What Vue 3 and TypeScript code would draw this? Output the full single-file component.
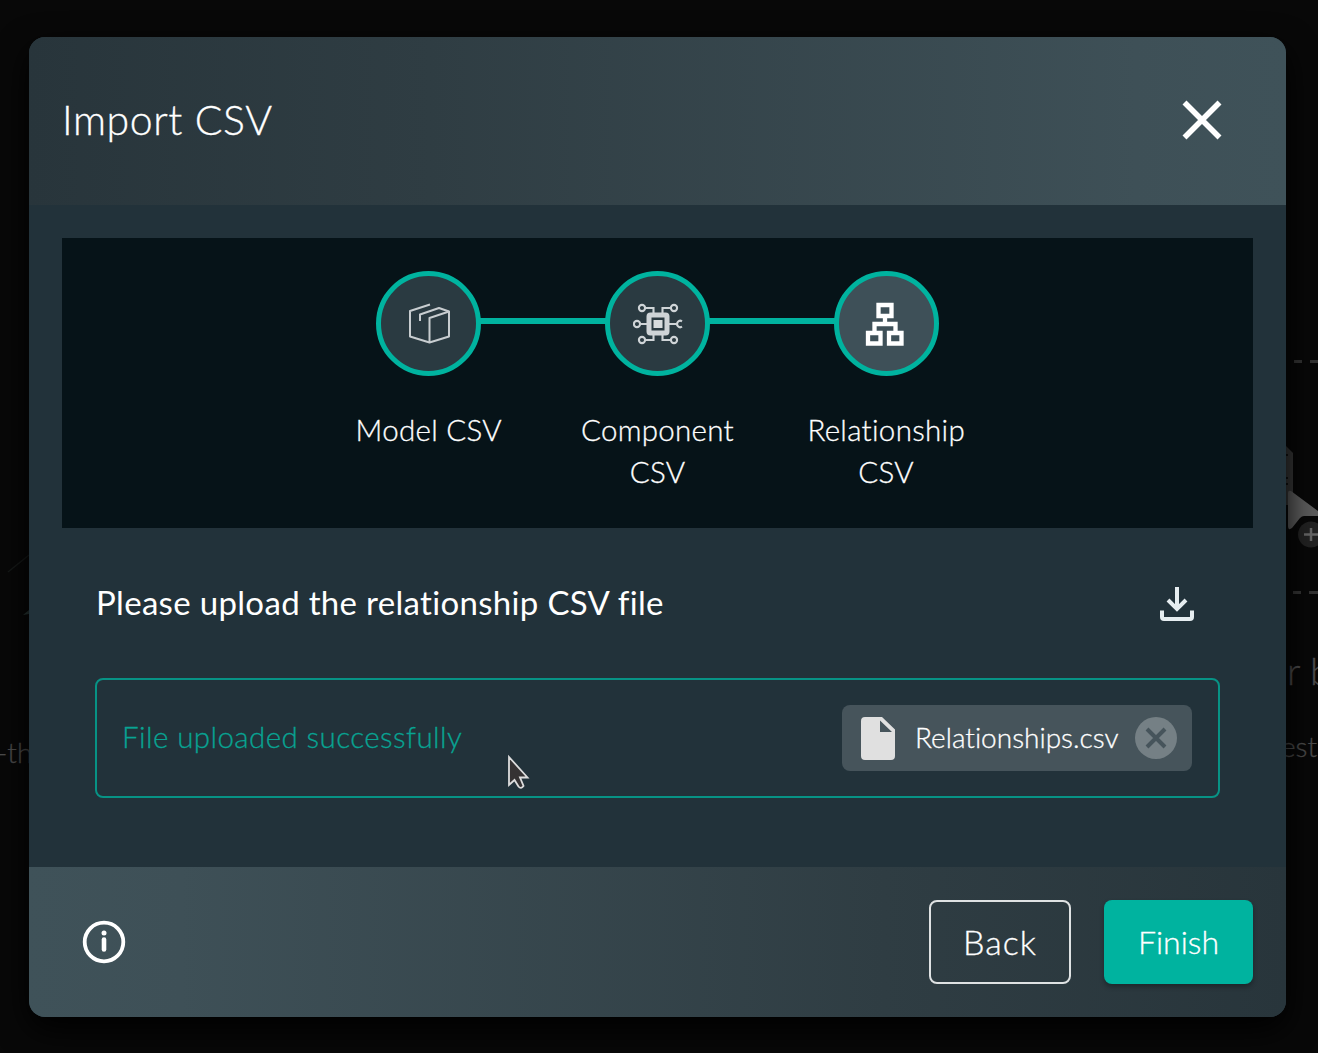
<script setup lang="ts">
interface Step {
  icon: 'model' | 'component' | 'relationship'
  lines: string[]
  active: boolean
}

const steps: Step[] = [
  { icon: 'model', lines: ['Model CSV'], active: false },
  { icon: 'component', lines: ['Component', 'CSV'], active: false },
  { icon: 'relationship', lines: ['Relationship', 'CSV'], active: true },
]
</script>

<template>
  <div class="page">
    <!-- Canvas behind the dimmed overlay -->
    <svg class="backdrop" width="1318" height="1053" viewBox="0 0 1318 1053" aria-hidden="true">
      <path d="M8 572L29 555" stroke="#161918" stroke-width="1.5" />
      <path d="M23 615L29 610V614Z" fill="#2a3836" />
      <path d="M1294 361.5h8M1310 361.5h8M1293 592.5h8M1309 592.5h9" stroke="#333" stroke-width="3" />
      <path d="M1280 440L1293 453V505H1280Z" fill="#383838" />
      <path d="M1286 455h2M1286 478h2M1286 484h2" stroke="#111" stroke-width="2" />
      <path d="M1288 493Q1288 490 1291 491L1318 511V516H1304Q1302 516 1300 518L1292 528Q1288 531 1288 526Z" fill="#5c5c5c" />
      <circle cx="1311" cy="534.500" r="13" fill="#222" />
      <path d="M1304 534.500h14M1311 528v13" stroke="#666" stroke-width="2.500" />
    </svg>
    <span class="ghost ghost-left">-th</span>
    <span class="ghost ghost-title">r b</span>
    <span class="ghost ghost-sub">ests</span>

    <section class="modal">
      <header class="head">
        <h1 class="title">Import CSV</h1>
        <svg class="close" width="40" height="40" viewBox="0 0 40 40">
          <path d="M2.500 2.500L37.500 37.500M37.500 2.500L2.500 37.500" stroke="#fff" stroke-width="5.600" />
        </svg>
      </header>

      <div class="body">
        <div class="stepper">
          <div v-for="step in steps" :key="step.icon" class="step">
            <div class="circle" :class="{ active: step.active }">
              <svg v-if="step.icon === 'model'" width="42" height="42" viewBox="0 0 42 42" fill="none" stroke="#c8cdd0" stroke-width="2" stroke-linejoin="round">
                <path d="M22 1.500L2 8V33.500L21.500 39.500L41 33.500V8.500L31 5L12 11.500V18" />
                <path d="M41 8.500L21.500 15V39.500" />
              </svg>
              <svg v-else-if="step.icon === 'component'" width="50" height="42" viewBox="0 0 50 42" fill="none" stroke="#cfd4d7" stroke-width="2.100">
                <path d="M12 5H20.500V11M38 5H29.500V11M12 37H20.500V31M38 37H29.500V31M7 21H15M35 21H43" />
                <circle cx="9" cy="5" r="3.100" /><circle cx="41" cy="5" r="3.100" />
                <circle cx="9" cy="37" r="3.100" /><circle cx="41" cy="37" r="3.100" />
                <circle cx="4" cy="21" r="3.100" />
                <path d="M49 18.300A3.200 3.200 0 1 0 49 23.700" />
                <rect x="16" y="12" width="18" height="18" rx="1.500" stroke-width="5" />
                <rect x="20.500" y="17" width="9" height="8" fill="#d8dcde" stroke="none" />
              </svg>
              <svg v-else class="tree" width="40" height="44" viewBox="0 0 40 44" fill="none" stroke="#fff" stroke-width="4.300">
                <path d="M13.500 3H26.500V14H13.500ZM3 31H15.500V41.500H3ZM24 31H36.500V41.500H24ZM20 14V22M9.500 31V22H30.500V31" />
              </svg>
            </div>
            <p class="label"><span v-for="line in step.lines" :key="line">{{ line }}</span></p>
          </div>
        </div>

        <div class="prompt">
          <p class="prompt-text">Please upload the relationship CSV file</p>
          <svg width="34" height="36" viewBox="0 0 34 36" fill="none" stroke="#e6edf0" stroke-width="4">
            <path d="M17 1V23M8 14L17 23L26 14M2 24.500V31Q2 33 4 33H30Q32 33 32 31V24.500" />
          </svg>
        </div>

        <div class="upload">
          <span class="status">File uploaded successfully</span>
          <div class="chip">
            <svg width="34" height="43" viewBox="0 0 34 43">
              <path fill="#e0e0e0" fill-rule="evenodd" d="M4 0H21L34 12.500V39Q34 43 30 43H4Q0 43 0 39V4Q0 0 4 0ZM19 3.500V15H31Z" />
            </svg>
            <span class="filename">Relationships.csv</span>
            <svg width="42" height="42" viewBox="0 0 42 42">
              <circle cx="21" cy="21" r="21" fill="#758085" />
              <path d="M12 12L30 30M30 12L12 30" stroke="#46545b" stroke-width="4" />
            </svg>
          </div>
        </div>
      </div>

      <footer class="foot">
        <svg class="info" width="44" height="44" viewBox="0 0 44 44" fill="none" stroke="#fff">
          <circle cx="22" cy="22" r="19.300" stroke-width="3.800" />
          <path d="M22 19.500V29.500" stroke-width="4.600" stroke-linecap="round" />
          <circle cx="22" cy="13" r="2.500" fill="#fff" stroke="none" />
        </svg>
        <button class="btn back"><span>Back</span></button>
        <button class="btn finish"><span>Finish</span></button>
      </footer>
    </section>

    <svg class="cursor" width="24" height="38" viewBox="0 0 24 38">
      <path d="M2 3V31L7.500 26L11.500 32.500Q14 35.500 16.500 32L13 23.500H20.500Z" fill="#353233" stroke="#ddd" stroke-width="1.800" />
    </svg>
  </div>
</template>

<style>
body {
  margin: 0;
  background: #080808;
}
</style>

<style scoped>
.page {
  position: relative;
  box-sizing: border-box;
  width: 1318px;
  height: 1053px;
  padding: 37px 32px 37px 29px;
  overflow: hidden;
  background: #080808;
  color: #fff;
  font-family: Lato, 'Liberation Sans', sans-serif;
  font-weight: 300;
  font-variant-ligatures: none;
  -webkit-text-stroke: 0.3px currentColor;
}
.backdrop {
  position: absolute;
  left: 0;
  top: 0;
}
.ghost {
  position: absolute;
  color: #4c4c4c;
  white-space: nowrap;
}
.ghost-left { left: -3px; top: 735px; font-size: 28px; }
.ghost-title { left: 1287px; top: 647px; font-size: 38px; }
.ghost-sub { left: 1281px; top: 729px; font-size: 28px; }
.modal {
  position: relative;
  display: flex;
  flex-direction: column;
  width: 1257px;
  height: 979.500px;
  border-radius: 16px;
  overflow: hidden;
  background: #22323a;
  box-shadow: 0 12px 32px #000;
}
.head {
  display: flex;
  align-items: center;
  justify-content: space-between;
  box-sizing: border-box;
  height: 167.500px;
  padding: 0 64px 2px 33px;
  background: linear-gradient(90deg, #28353b 0%, #2f3d43 32%, #3e5057 88%, #3f5259 100%);
}
.title {
  margin: 0;
  font-size: 41px;
  font-weight: 300;
  letter-spacing: 0.6px;
  white-space: nowrap;
}
.body {
  flex: 1;
  padding: 33.500px 33px 0;
}
.stepper {
  display: flex;
  justify-content: center;
  box-sizing: border-box;
  height: 289.500px;
  padding-top: 33px;
  background: #061318;
}
.step {
  position: relative;
  display: flex;
  flex-direction: column;
  align-items: center;
  width: 228.700px;
}
.step + .step::before {
  content: '';
  position: absolute;
  left: -63px;
  top: 47px;
  width: 126px;
  height: 5.500px;
  background: #00b39f;
}
.circle {
  display: flex;
  align-items: center;
  justify-content: center;
  box-sizing: border-box;
  width: 105px;
  height: 105px;
  border: 5px solid #00b39f;
  border-radius: 50%;
  background: #2a3a41;
}
.circle.active {
  background: #3e5058;
}
.tree {
  margin-right: 2px;
}
.label {
  display: flex;
  flex-direction: column;
  align-items: center;
  margin: 33px 0 0;
  font-size: 29.500px;
  line-height: 42px;
  letter-spacing: 0.3px;
  white-space: nowrap;
}
.prompt {
  display: flex;
  align-items: center;
  justify-content: space-between;
  height: 68px;
  margin-top: 42px;
  padding: 0 59px 0 34px;
}
.prompt-text {
  margin: 0;
  padding-bottom: 3px;
  font-size: 33px;
  font-weight: 400;
  letter-spacing: 0.32px;
  white-space: nowrap;
  -webkit-text-stroke: 0;
}
.upload {
  display: flex;
  align-items: center;
  justify-content: space-between;
  box-sizing: border-box;
  width: 1125px;
  height: 120px;
  margin: 40px 0 0 33px;
  padding: 1px 26px 0 25px;
  border: 2px solid #079385;
  border-radius: 8px;
}
.status {
  padding-bottom: 3px;
  color: #08a392;
  font-size: 29.500px;
  letter-spacing: 0.42px;
  white-space: nowrap;
}
.chip {
  display: flex;
  align-items: center;
  box-sizing: border-box;
  width: 350px;
  height: 66px;
  padding: 0 15px 0 19px;
  border-radius: 8px;
  background: #46545b;
}
.filename {
  flex: 1;
  padding: 0 0 2px 20px;
  font-size: 28px;
  white-space: nowrap;
}
.foot {
  display: flex;
  align-items: center;
  box-sizing: border-box;
  height: 149.500px;
  padding: 0 33px 0 53px;
  background: linear-gradient(90deg, #3f5259 0%, #3e5057 12%, #2f3d43 68%, #28353b 100%);
}
.info {
  margin-right: auto;
}
.btn {
  box-sizing: border-box;
  height: 84px;
  padding: 0;
  border: 0;
  border-radius: 8px;
  color: #fff;
  font: inherit;
  font-size: 32px;
}
.back {
  width: 142px;
  margin-right: 33px;
  border: 2px solid #dfe2e3;
  background: transparent;
  font-size: 34px;
  letter-spacing: 1px;
}
.finish {
  width: 149px;
  background: #00b39f;
  box-shadow: 0 3px 5px rgba(0, 0, 0, 0.3);
}
.cursor {
  position: absolute;
  left: 507px;
  top: 754px;
}
</style>
